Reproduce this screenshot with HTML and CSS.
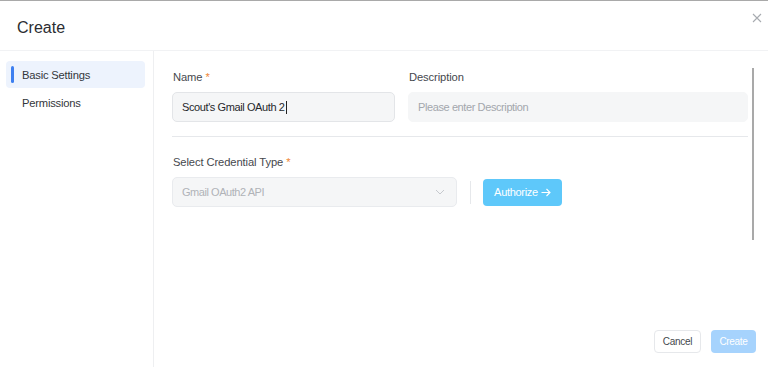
FILE: index.html
```html
<!DOCTYPE html>
<html>
<head>
<meta charset="utf-8">
<link rel="stylesheet" href="styles.css">
</head>
<body>
<div class="dialog">
  <header class="header">
    <h1 class="title">Create</h1>
    <button class="close" aria-label="Close">
      <svg width="10" height="10" viewBox="0 0 10 10"><path d="M1 1L9 9M9 1L1 9" stroke="#a8abb0" stroke-width="1.1" fill="none"/></svg>
    </button>
  </header>
  <div class="body">
    <nav class="sidebar">
      <div class="nav-item active">Basic Settings</div>
      <div class="nav-item">Permissions</div>
    </nav>
    <main class="main">
      <div class="content">
        <div class="row">
          <div class="field name-field">
            <label class="label">Name <span class="req">*</span></label>
            <div class="input filled">Scout's Gmail OAuth 2<span class="caret"></span></div>
          </div>
          <div class="field desc-field">
            <label class="label">Description</label>
            <div class="input placeholder">Please enter Description</div>
          </div>
        </div>
        <div class="divider"></div>
        <div class="field">
          <label class="label">Select Credential Type <span class="req">*</span></label>
          <div class="select-row">
            <div class="select">
              <span>Gmail OAuth2 API</span>
              <svg width="10" height="6" viewBox="0 0 10 6"><path d="M1 1L5 5L9 1" stroke="#c6c9ce" stroke-width="1" fill="none"/></svg>
            </div>
            <span class="vsep"></span>
            <button class="authorize">Authorize <svg class="arrow" width="10" height="9" viewBox="0 0 10 9"><path d="M0.5 4.5H9M5.5 1L9 4.5L5.5 8" stroke="#fff" stroke-width="1.1" fill="none"/></svg></button>
          </div>
        </div>
      </div>
      <div class="scrollbar"></div>
      <footer class="footer">
        <button class="btn cancel">Cancel</button>
        <button class="btn create">Create</button>
      </footer>
    </main>
  </div>
</div>
</body>
</html>
```
FILE: styles.css
```css
* { box-sizing: border-box; }
html, body { margin: 0; padding: 0; background: #fff; }
body {
  font-family: "Liberation Sans", Arial, sans-serif;
  color: #303133;
  width: 768px;
  height: 367px;
  overflow: hidden;
}
.dialog {
  height: 367px;
  border-top: 1px solid #a9a9a9;
  display: flex;
  flex-direction: column;
}
.header {
  height: 50px;
  flex: none;
  display: flex;
  align-items: center;
  justify-content: space-between;
  padding: 0 6px 0 17px;
  border-bottom: 1px solid #f1f2f4;
}
.title {
  margin: 0;
  font-size: 16px;
  font-weight: 400;
  color: #2b2d31;
  padding-top: 4px;
}
.close {
  border: 0;
  background: none;
  padding: 0;
  margin-bottom: 16px;
  width: 10px;
  height: 10px;
  display: flex;
}
.body {
  flex: 1;
  display: flex;
  min-height: 0;
}
.sidebar {
  width: 154px;
  flex: none;
  border-right: 1px solid #eeeff1;
  padding: 10px 8px 0 6px;
  display: flex;
  flex-direction: column;
  gap: 1px;
}
.nav-item {
  height: 27px;
  display: flex;
  align-items: center;
  padding-left: 16px;
  font-size: 11.2px;
  letter-spacing: -0.2px;
  color: #33363b;
  border-radius: 4px;
  position: relative;
}
.nav-item.active {
  background: #edf3fd;
}
.nav-item.active::before {
  content: "";
  position: absolute;
  left: 5px;
  top: 5px;
  bottom: 5px;
  width: 3px;
  border-radius: 2px;
  background: #3d7ff0;
}
.main {
  flex: 1;
  position: relative;
  display: flex;
  flex-direction: column;
  padding: 0 12px 14px 18px;
}
.content {
  flex: 1;
  padding-top: 20px;
  padding-right: 8px;
}
.row {
  display: flex;
  gap: 13px;
}
.field { display: flex; flex-direction: column; }
.name-field { width: 223px; flex: none; }
.desc-field { flex: 1; }
.label {
  font-size: 11.2px;
  letter-spacing: -0.1px;
  color: #45484d;
  height: 15px;
  margin-bottom: 6px;
  padding-left: 1px;
}
.req { color: #f0883a; }
.input {
  height: 30px;
  border-radius: 5px;
  background: #f5f6f7;
  border: 1px solid #e3e5e8;
  font-size: 11px;
  letter-spacing: -0.4px;
  display: flex;
  align-items: center;
  padding-left: 9px;
}
.input.filled { color: #26282c; }
.input.placeholder { border-color: #f5f6f7; color: #a3a7ad; }
.caret {
  display: inline-block;
  width: 1px;
  height: 13px;
  background: #222;
  margin-left: 1px;
}
.divider {
  height: 1px;
  background: #e6e8eb;
  margin: 14px 0 19px;
}
.select-row {
  display: flex;
  align-items: center;
}
.select {
  width: 285px;
  height: 30px;
  border-radius: 5px;
  background: #f5f6f7;
  border: 1px solid #e9ebee;
  font-size: 11px;
  letter-spacing: -0.45px;
  color: #b0b3b8;
  display: flex;
  align-items: center;
  justify-content: space-between;
  padding: 0 11px 0 9px;
}
.vsep {
  width: 1px;
  height: 23px;
  background: #e6e8eb;
  margin: 0 12px 0 13px;
}
.authorize {
  width: 79px;
  height: 27px;
  border: 0;
  border-radius: 4px;
  background: #5ec8fa;
  color: #fff;
  font-family: inherit;
  font-size: 11px;
  letter-spacing: -0.3px;
  padding: 0;
  display: flex;
  align-items: center;
  justify-content: center;
  gap: 3px;
}
.scrollbar {
  position: absolute;
  right: 14px;
  top: 17px;
  width: 2px;
  height: 172px;
  background: #a9a9a9;
}
.footer {
  display: flex;
  justify-content: flex-end;
  gap: 10px;
}
.btn {
  height: 23px;
  border-radius: 4px;
  font-family: inherit;
  font-size: 10px;
  letter-spacing: -0.3px;
  padding: 0;
}
.cancel {
  width: 47px;
  background: #fff;
  border: 1px solid #e6e8eb;
  color: #45484d;
}
.create {
  width: 45px;
  background: #a6d3fd;
  border: 0;
  color: #fff;
}
```
